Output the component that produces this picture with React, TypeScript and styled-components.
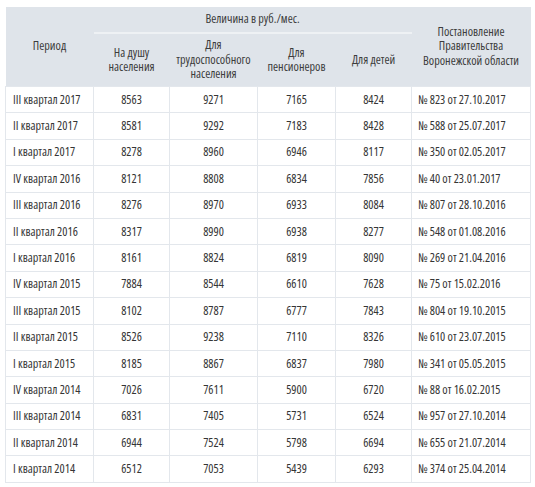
import React from "react";
import styled, { createGlobalStyle } from "styled-components";

const Global = createGlobalStyle`
  html, body { margin: 0; padding: 0; background: #ffffff; }
  body { font-family: "Open Sans", "Noto Sans", sans-serif; }
`;

const Wrap = styled.div`
  padding: 7px 5px 8px 5px;
`;

const Table = styled.table`
  width: 525px;
  border-collapse: collapse;
  table-layout: fixed;
  font-family: "Open Sans", "Noto Sans", sans-serif;
  font-stretch: 87.5%;
  font-size: 12.2px;
  color: #353535;
`;

const HeadCell = styled.th<{ $line?: boolean }>`
  background: #dfe4ea;
  font-weight: normal;
  color: #3c3c3c;
  text-align: center;
  vertical-align: middle;
  line-height: 14.5px;
  padding: 0 3px;
  border: 0;
  border-bottom: ${(p) => (p.$line ? "2px solid #eef1f4" : "0")};
`;

const TopHead = styled(HeadCell)`
  height: 25px;
`;

const SubHead = styled(HeadCell)`
  height: 52px;
`;

const Cell = styled.td<{ $align?: "left" | "center"; $pad?: number }>`
  height: 25.4px;
  padding: 0 6px 0 ${(p) => p.$pad ?? 6}px;
  border: 1px solid #e3e7ec;
  text-align: ${(p) => p.$align ?? "center"};
  white-space: nowrap;
  line-height: 14px;
`;

type Row = [string, number, number, number, number, string];

const rows: Row[] = [
  ["III квартал 2017", 8563, 9271, 7165, 8424, "№ 823 от 27.10.2017"],
  ["II квартал 2017", 8581, 9292, 7183, 8428, "№ 588 от 25.07.2017"],
  ["I квартал 2017", 8278, 8960, 6946, 8117, "№ 350 от 02.05.2017"],
  ["IV квартал 2016", 8121, 8808, 6834, 7856, "№ 40 от 23.01.2017"],
  ["III квартал 2016", 8276, 8970, 6933, 8084, "№ 807 от 28.10.2016"],
  ["II квартал 2016", 8317, 8990, 6938, 8277, "№ 548 от 01.08.2016"],
  ["I квартал 2016", 8161, 8824, 6819, 8090, "№ 269 от 21.04.2016"],
  ["IV квартал 2015", 7884, 8544, 6610, 7628, "№ 75 от 15.02.2016"],
  ["III квартал 2015", 8102, 8787, 6777, 7843, "№ 804 от 19.10.2015"],
  ["II квартал 2015", 8526, 9238, 7110, 8326, "№ 610 от 23.07.2015"],
  ["I квартал 2015", 8185, 8867, 6837, 7980, "№ 341 от 05.05.2015"],
  ["IV квартал 2014", 7026, 7611, 5900, 6720, "№ 88 от 16.02.2015"],
  ["III квартал 2014", 6831, 7405, 5731, 6524, "№ 957 от 27.10.2014"],
  ["II квартал 2014", 6944, 7524, 5798, 6694, "№ 655 от 21.07.2014"],
  ["I квартал 2014", 6512, 7053, 5439, 6293, "№ 374 от 25.04.2014"],
];

const widths = [88, 76, 88, 78, 76, 119];

export default function App() {
  return (
    <>
      <Global />
      <Wrap>
        <Table>
          <colgroup>
            {widths.map((w, i) => (
              <col key={i} style={{ width: w }} />
            ))}
          </colgroup>
          <thead>
            <tr>
              <TopHead rowSpan={2}>Период</TopHead>
              <TopHead colSpan={4} $line>
                Величина в руб./мес.
              </TopHead>
              <TopHead rowSpan={2}>
                Постановление
                <br />
                Правительства
                <br />
                Воронежской области
              </TopHead>
            </tr>
            <tr>
              <SubHead>
                На душу
                <br />
                населения
              </SubHead>
              <SubHead>
                Для
                <br />
                трудоспособного
                <br />
                населения
              </SubHead>
              <SubHead>
                Для
                <br />
                пенсионеров
              </SubHead>
              <SubHead>Для детей</SubHead>
            </tr>
          </thead>
          <tbody>
            {rows.map((r) => (
              <tr key={r[0]}>
                <Cell $align="left" $pad={7}>
                  {r[0]}
                </Cell>
                <Cell>{r[1]}</Cell>
                <Cell>{r[2]}</Cell>
                <Cell>{r[3]}</Cell>
                <Cell>{r[4]}</Cell>
                <Cell $align="left">{r[5]}</Cell>
              </tr>
            ))}
          </tbody>
        </Table>
      </Wrap>
    </>
  );
}
